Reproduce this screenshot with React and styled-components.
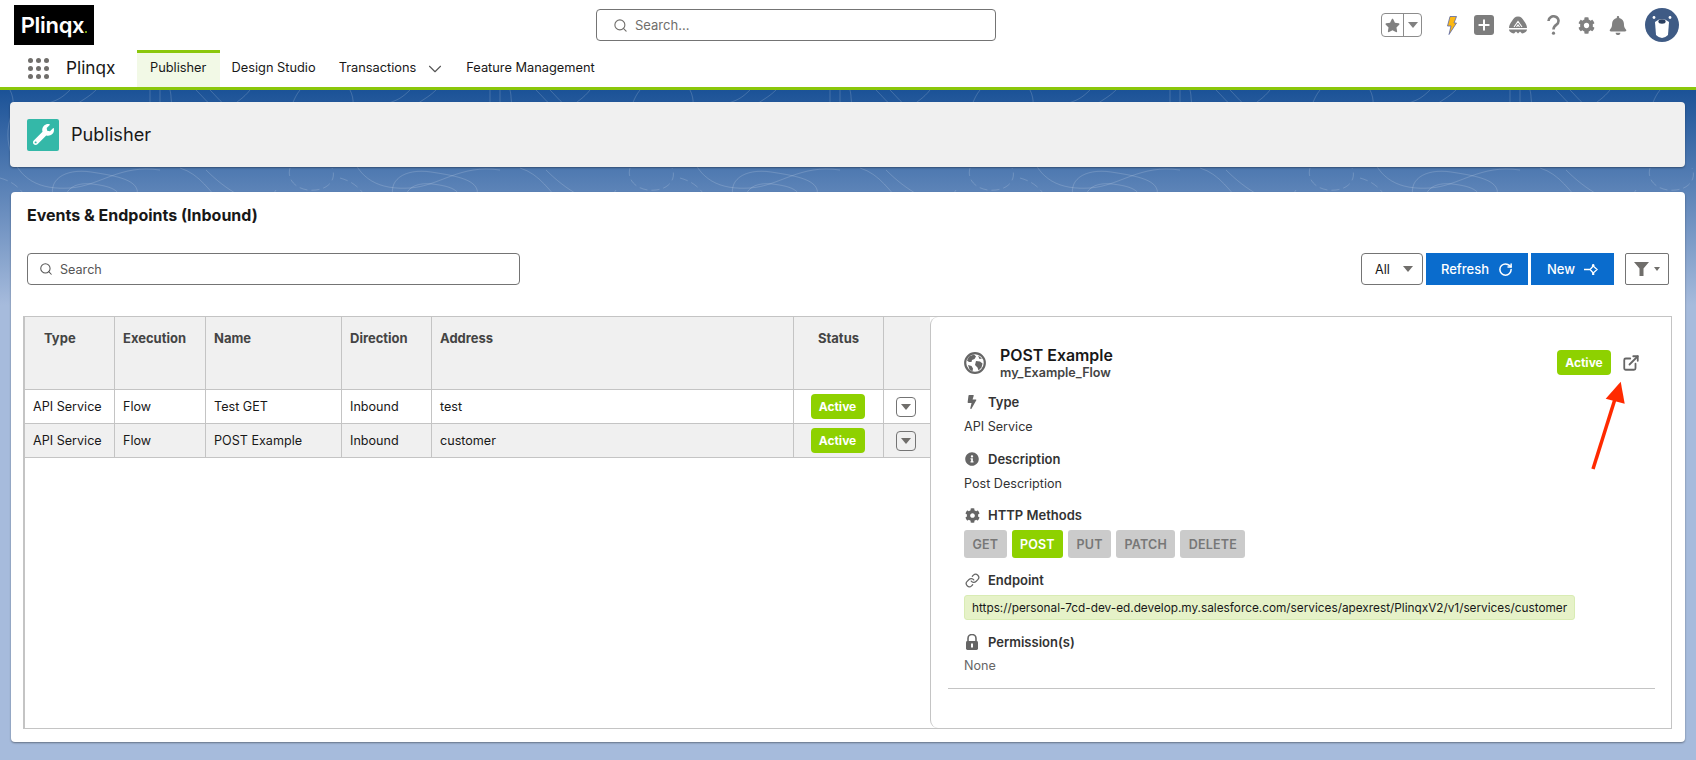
import React from "react";
import styled, { createGlobalStyle } from "styled-components";
import { Search, ChevronDown, RotateCw, ExternalLink, Link, Plus } from "lucide-react";
import { FaWrench, FaInfoCircle, FaCog, FaStar, FaBolt, FaBell } from "react-icons/fa";

const GlobalStyle = createGlobalStyle`
    html, body {
        margin: 0;
        padding: 0;
        background: #a6bbdc;
    }
    body {
        font-family: Inter, "Noto Sans", "Liberation Sans", sans-serif;
        color: #181818;
        font-size: 12.6px;
    }
    * {
        box-sizing: border-box;
    }
`;

const Shell = styled.div`
    width: 1696px;
    height: 760px;
    overflow: hidden;
    display: flex;
    flex-direction: column;
`;

const TopBar = styled.header`
    height: 50px;
    background: white;
    display: flex;
    align-items: center;
    padding: 0 17px 0 14px;
`;

const Logo = styled.div`
    width: 80px;
    height: 40px;
    background: black;
    color: white;
    font-weight: 600;
    font-size: 22px;
    letter-spacing: -0.3px;
    display: flex;
    align-items: center;
    justify-content: center;
`;

const LogoDot = styled.span`
    width: 2px;
    height: 2px;
    background: #6f9e10;
    align-self: flex-end;
    margin: 0 0 12px 1px;
`;

const GlobalSearch = styled.div`
    width: 400px;
    height: 32px;
    margin-left: 502px;
    border: 1px solid #747474;
    border-radius: 4px;
    display: flex;
    align-items: center;
    padding-left: 16px;
    gap: 7px;
    color: #706e6b;
    font-size: 13px;
`;

const TopActions = styled.div`
    margin-left: auto;
    display: flex;
    align-items: center;
    height: 34px;
`;

const Favorite = styled.div`
    width: 41px;
    height: 24px;
    border: 1px solid #8c8c8c;
    border-radius: 4px;
    display: flex;
    align-items: center;
    margin-right: 25px;
    color: #808080;
`;

const FavoriteStar = styled.div`
    width: 22px;
    height: 100%;
    display: flex;
    align-items: center;
    justify-content: center;
    border-right: 1px solid #8c8c8c;
`;

const FavoriteCaret = styled.div`
    flex: 1;
    display: flex;
    justify-content: center;
`;

const Caret = styled.span`
    width: 0;
    height: 0;
    border-left: ${(props) => props.size || 5}px solid transparent;
    border-right: ${(props) => props.size || 5}px solid transparent;
    border-top: ${(props) => (props.size || 5) + 1}px solid ${(props) => props.color || "#808080"};
    display: inline-block;
`;

const TopIcon = styled.div`
    width: ${(props) => props.width}px;
    margin-right: ${(props) => props.gap}px;
    display: flex;
    justify-content: center;
    align-items: center;
    color: #808080;
`;

const PlusBox = styled.div`
    width: 20px;
    height: 20px;
    background: #7d7d7d;
    border-radius: 3px;
    color: white;
    display: flex;
    align-items: center;
    justify-content: center;
`;

const NavBar = styled.nav`
    height: 40px;
    background: white;
    border-bottom: 3px solid #8bc70b;
    display: flex;
    align-items: stretch;
    padding-left: 28px;
`;

const Waffle = styled.div`
    width: 22px;
    display: grid;
    grid-template-columns: repeat(3, 5px);
    gap: 3px;
    align-content: center;
    margin-right: 16px;
    span {
        width: 5px;
        height: 5px;
        border-radius: 50%;
        background: #706e6b;
    }
`;

const AppName = styled.div`
    font-size: 17.2px;
    width: 71px;
    padding-bottom: 2px;
    display: flex;
    align-items: center;
`;

const NavTab = styled.div`
    display: flex;
    align-items: center;
    gap: 8px;
    padding: 0 ${(props) => (props.active ? 13 : 11.5)}px 5px;
    font-size: 12.8px;
    border-top: 3px solid ${(props) => (props.active ? "#8bc70b" : "transparent")};
    background: ${(props) => (props.active ? "#f2f9e6" : "white")};
    width: ${(props) => props.width}px;
    white-space: nowrap;
    svg {
        margin-right: -3px;
        margin-top: 2px;
    }
`;

const Stage = styled.main`
    flex: 1;
    position: relative;
    padding: 12px 11px 0 10px;
    background: linear-gradient(#1b5297 0, #a6bbdc 215px);
`;

const Contours = styled.svg`
    position: absolute;
    top: 0;
    left: 0;
    width: 100%;
    height: 120px;
`;

const PageHeader = styled.section`
    position: relative;
    height: 65px;
    background: #f0f0f0;
    border-radius: 4px;
    box-shadow: 0 1px 2px rgba(0, 0, 0, 0.35);
    display: flex;
    align-items: center;
    padding-left: 17px;
    gap: 12px;
`;

const PageIcon = styled.div`
    width: 32px;
    height: 32px;
    background: #34b8a8;
    border-radius: 2px;
    color: white;
    display: flex;
    align-items: center;
    justify-content: center;
`;

const PageTitle = styled.h1`
    margin: 0 0 2px;
    font-size: 18.2px;
    font-weight: 400;
`;

const MainCard = styled.section`
    position: relative;
    margin-top: 25px;
    margin-left: 1px;
    height: 550px;
    background: white;
    border-radius: 4px;
    box-shadow: 0 1px 2px rgba(0, 0, 0, 0.4);
    padding: 13px 13px 0 12px;
`;

const CardTitle = styled.h2`
    margin: 0;
    padding-left: 4px;
    font-size: 16px;
    line-height: 20px;
    font-weight: 700;
`;

const Toolbar = styled.div`
    margin-top: 28px;
    padding: 0 3px 0 4px;
    display: flex;
    align-items: center;
`;

const SearchField = styled.div`
    width: 493px;
    height: 32px;
    border: 1px solid #747474;
    border-radius: 4px;
    display: flex;
    align-items: center;
    gap: 7px;
    padding-left: 11px;
    font-size: 12.6px;
    color: #555;
`;

const ToolbarRight = styled.div`
    margin-left: auto;
    display: flex;
    align-items: center;
`;

const AllSelect = styled.div`
    width: 62px;
    height: 32px;
    border: 1px solid #747474;
    border-radius: 4px;
    display: flex;
    align-items: center;
    justify-content: space-between;
    padding: 0 9px 0 13px;
    margin-right: 3px;
`;

const BlueButton = styled.button`
    width: ${(props) => props.width}px;
    height: 32px;
    margin-right: 3px;
    border: none;
    background: #0a6ccd;
    color: white;
    font: inherit;
    font-size: 13px;
    font-weight: 500;
    display: flex;
    align-items: center;
    justify-content: center;
    gap: 9px;
`;

const FilterButton = styled.div`
    width: 44px;
    height: 32px;
    margin-left: 8px;
    border: 1px solid #747474;
    border-radius: 2px;
    display: flex;
    align-items: center;
    justify-content: center;
    gap: 5px;
`;

const Split = styled.div`
    margin-top: 31px;
    height: 413px;
    display: flex;
    border: 1px solid #c4c4c4;
    border-left-width: 2px;
    border-right-width: 1px;
`;

const TableSide = styled.div`
    width: 905px;
`;

const Row = styled.div`
    display: grid;
    grid-template-columns: 90px 91px 136px 90px 362px 90px 1fr;
    background: ${(props) => (props.shaded ? "#f0f0f0" : "white")};
    border-bottom: 1px solid #c4c4c4;
    height: ${(props) => props.height}px;
`;

const Cell = styled.div`
    border-right: 1px solid #c4c4c4;
    padding: ${(props) => (props.center ? "0 10px 0 8px" : "0 8px")};
    display: flex;
    align-items: center;
    justify-content: ${(props) => (props.center ? "center" : "flex-start")};
    &:last-child {
        border-right: none;
    }
`;

const HeadCell = styled.div`
    border-right: 1px solid #c4c4c4;
    padding: 13px 8px 0 ${(props) => props.indent || 8}px;
    text-align: ${(props) => (props.center ? "center" : "left")};
    font-weight: 700;
    font-size: 13px;
    line-height: 16px;
    color: #444;
    &:last-child {
        border-right: none;
    }
`;

const Badge = styled.span`
    width: 54px;
    height: 25px;
    border-radius: 4px;
    background: #8ed100;
    color: white;
    font-weight: 700;
    font-size: 12px;
    display: flex;
    align-items: center;
    justify-content: center;
`;

const RowMenu = styled.div`
    width: 20px;
    height: 20px;
    border: 1px solid #747474;
    border-radius: 4px;
    display: flex;
    align-items: center;
    justify-content: center;
    margin-left: 4px;
`;

const DetailPanel = styled.aside`
    position: relative;
    flex: 1;
    border-left: 1px solid #c4c4c4;
    border-radius: 8px 0 0 8px;
    padding: 28px 16px 0 17px;
    background: white;
`;

const DetailBody = styled.div`
    padding: 0 15px 12px 16px;
    border-bottom: 1px solid #c4c4c4;
    display: flex;
    flex-direction: column;
`;

const DetailHead = styled.div`
    display: flex;
    align-items: flex-start;
    gap: 14px;
`;

const DetailNames = styled.div`
    flex: 1;
    padding-top: 1px;
`;

const DetailName = styled.div`
    font-size: 15.9px;
    line-height: 20px;
    font-weight: 600;
    color: #181818;
`;

const DetailApi = styled.div`
    font-size: 12.6px;
    line-height: 14px;
    font-weight: 600;
    color: #444;
`;

const DetailStatus = styled.div`
    display: flex;
    align-items: center;
    gap: 11px;
    margin-top: 5px;
`;

const Label = styled.div`
    margin-top: ${(props) => props.top ?? 12}px;
    height: 20px;
    display: flex;
    align-items: center;
    gap: 8px;
    font-size: 13px;
    font-weight: 600;
    color: #333;
`;

const LabelIcon = styled.span`
    width: 16px;
    display: flex;
    justify-content: center;
    color: #666;
`;

const Value = styled.div`
    margin-top: ${(props) => props.top ?? 5}px;
    line-height: 20px;
    color: ${(props) => props.color || "#333"};
`;

const Methods = styled.div`
    margin-top: 5px;
    display: flex;
    gap: 5px;
`;

const Method = styled.span`
    height: 28px;
    padding: 0 8.4px;
    border-radius: 3px;
    background: ${(props) => (props.on ? "#8ed100" : "#cbcbcb")};
    color: ${(props) => (props.on ? "white" : "#777")};
    font-size: 12.5px;
    font-weight: 600;
    letter-spacing: 0.2px;
    display: flex;
    align-items: center;
`;

const EndpointBox = styled.div`
    margin-top: 5px;
    width: 611px;
    height: 25px;
    background: #e6f2c8;
    border: 1px solid #d9ecb4;
    border-radius: 3px;
    padding-left: 7px;
    font-size: 11.8px;
    display: flex;
    align-items: center;
    white-space: nowrap;
`;

const Arrow = styled.svg`
    position: absolute;
    left: 654px;
    top: 62px;
`;

const rows = [
    { name: "Test GET", address: "test" },
    { name: "POST Example", address: "customer", shaded: true },
];

function Bolt() {
    return (
        <svg width="10" height="19" viewBox="0 0 10 19">
            <path d="M3 .5h6.5L7 7h2.5L2 18.5 4 10H.5z" fill="#fcb814" stroke="#5867a8" strokeWidth=".8" />
        </svg>
    );
}

function QuestionIcon() {
    return (
        <svg width="13" height="20" viewBox="0 0 13 20" fill="none" stroke="#808080" strokeWidth="2.6">
            <path d="M1.5 6a5 4.6 0 1 1 8 3.6C7.5 11 6.5 12 6.5 14.5" />
            <circle cx="6.5" cy="18.2" r="1.6" fill="#808080" stroke="none" />
        </svg>
    );
}

function NewIcon() {
    return (
        <svg width="14" height="15" viewBox="0 0 16 16" fill="none" stroke="white" strokeWidth="1.5">
            <path d="M0 8h7M7 8l3.5-4M7 8l3.5 4M10.5 4L15 8l-4.5 4" />
            <circle cx="10.5" cy="3" r="1.4" fill="white" stroke="none" />
            <circle cx="10.5" cy="13" r="1.4" fill="white" stroke="none" />
        </svg>
    );
}

function FilterIcon() {
    return (
        <svg width="15" height="14" viewBox="0 0 15 14">
            <path d="M0 0h15L9.5 6.5V14h-4V6.5z" fill="#706e6b" />
        </svg>
    );
}

function GlobeIcon() {
    return (
        <svg width="22" height="22" viewBox="0 0 22 22" style={{ marginTop: 7, flexShrink: 0 }}>
            <circle cx="11" cy="11" r="9.8" fill="none" stroke="#666" strokeWidth="2.2" />
            <path d="M5 4.5l5-2 2 2-1.5 2.5-2.5 1-.5 2-2.5 0L3 8.5zM12 9l4 .5 2.5 2-1 4-3 3-1-3-2.5-2.5zM4 13l3.5 1 1.5 2.5-.5 3L5.5 17.500z M14 3.500l4 3-2.500.5z" fill="#666" />
        </svg>
    );
}

function TrailIcon() {
    return (
        <svg width="20" height="20" viewBox="0 0 20 20">
            <path d="M10 1.500c3 0 4.500 2 6 4.500 1.500 2 3 4 3 7H1c0-3 1.500-5 3-7C5.500 3.500 7 1.500 10 1.500z" fill="#808080" />
            <path d="M1 14.500h18c0 2-2 3.500-5 4l-2-2-2 2-2-2-2 2c-3-.5-5-2-5-4z" fill="#808080" />
            <path d="M6 12L10 6.500 14 12M8.500 12l1.500-2 1.500 2" fill="none" stroke="white" strokeWidth="1.1" />
        </svg>
    );
}

function Avatar() {
    return (
        <svg width="34" height="34" viewBox="0 0 34 34">
            <circle cx="17" cy="17" r="17" fill="#3f5b85" />
            <circle cx="9" cy="9.500" r="1.400" fill="white" />
            <circle cx="25" cy="9.500" r="1.400" fill="white" />
            <path d="M10 14 Q17 8 24 14 L23 27 Q17 33 11 27 Z" fill="white" />
            <ellipse cx="17" cy="13.500" rx="3.600" ry="2.200" fill="#2b3f60" />
        </svg>
    );
}

function LockIcon() {
    return (
        <svg width="14" height="16" viewBox="0 0 14 16">
            <path d="M3 7V4.500a4 4 0 0 1 8 0V7" fill="none" stroke="#666" strokeWidth="1.600" />
            <rect x="1" y="7" width="12" height="9" rx="1.400" fill="#666" />
            <rect x="6" y="9.500" width="2" height="4" fill="white" />
        </svg>
    );
}

function App() {
    return (
        <Shell>
            <GlobalStyle />
            <TopBar>
                <Logo>
                    Plinqx
                    <LogoDot />
                </Logo>
                <GlobalSearch>
                    <Search size={15} strokeWidth={1.8} />
                    Search...
                </GlobalSearch>
                <TopActions>
                    <Favorite>
                        <FavoriteStar>
                            <FaStar size={15} />
                        </FavoriteStar>
                        <FavoriteCaret>
                            <Caret size={5} />
                        </FavoriteCaret>
                    </Favorite>
                    <TopIcon width={10} gap={17}>
                        <Bolt />
                    </TopIcon>
                    <TopIcon width={20} gap={14}>
                        <PlusBox>
                            <Plus size={16} strokeWidth={3} />
                        </PlusBox>
                    </TopIcon>
                    <TopIcon width={20} gap={19}>
                        <TrailIcon />
                    </TopIcon>
                    <TopIcon width={13} gap={18}>
                        <QuestionIcon />
                    </TopIcon>
                    <TopIcon width={17} gap={14}>
                        <FaCog size={19} />
                    </TopIcon>
                    <TopIcon width={18} gap={18}>
                        <FaBell size={19} />
                    </TopIcon>
                    <Avatar />
                </TopActions>
            </TopBar>
            <NavBar>
                <Waffle>
                    {Array.from({ length: 9 }, (_, i) => (
                        <span key={i} />
                    ))}
                </Waffle>
                <AppName>Plinqx</AppName>
                <NavTab active width={83}>Publisher</NavTab>
                <NavTab>Design Studio</NavTab>
                <NavTab>
                    Transactions
                    <ChevronDown size={22} strokeWidth={1.2} color="#555" />
                </NavTab>
                <NavTab>Feature Management</NavTab>
            </NavBar>
            <Stage>
                <Contours>
                    <defs>
                        <pattern id="topo" width="340" height="120" patternUnits="userSpaceOnUse">
                            <g fill="none" stroke="white" strokeOpacity="0.16" strokeWidth="1">
                                <path d="M10 0c10 20 -8 30 0 60s30 40 60 38 50-24 90-18" />
                                <path d="M70 0c-16 16-20 8-34 22M96 0c-10 10-20 12-30 24" />
                                <path d="M150 0v16M160 0v18M170 0c2 8 0 12 4 20M196 0c10 10 14 16 22 20M210 0c8 8 12 14 20 18" />
                                <path d="M250 0c-6 8-14 12-20 18M300 0c-8 10-6 16-14 22" />
                                <path d="M55 112c-10-22 10-34 36-30s50 8 46 24-22 14-30 14" />
                                <path d="M66 116c-4-16 8-24 26-22s30 6 28 18" />
                                <path d="M180 78c20 6 30 24 44 38M206 80c10 10 20 18 34 26s30 4 36-6" />
                                <path d="M290 78c-4 14 10 24 26 22s20-14 16-22M0 88c14 4 20 10 28 22" strokeDasharray="8 4" />
                            </g>
                        </pattern>
                    </defs>
                    <rect width="100%" height="120" fill="url(#topo)" />
                </Contours>
                <PageHeader>
                    <PageIcon>
                        <FaWrench size={21} />
                    </PageIcon>
                    <PageTitle>Publisher</PageTitle>
                </PageHeader>
                <MainCard>
                    <CardTitle>Events &amp; Endpoints (Inbound)</CardTitle>
                    <Toolbar>
                        <SearchField>
                            <Search size={14} strokeWidth={1.8} color="#555" />
                            Search
                        </SearchField>
                        <ToolbarRight>
                            <AllSelect>
                                All
                                <Caret size={5} color="#706e6b" />
                            </AllSelect>
                            <BlueButton width={102}>
                                Refresh
                                <RotateCw size={15} strokeWidth={2.4} />
                            </BlueButton>
                            <BlueButton width={83}>
                                New
                                <NewIcon />
                            </BlueButton>
                            <FilterButton>
                                <FilterIcon />
                                <Caret size={3} color="#706e6b" />
                            </FilterButton>
                        </ToolbarRight>
                    </Toolbar>
                    <Split>
                        <TableSide>
                            <Row height={73} shaded>
                                <HeadCell indent={19}>Type</HeadCell>
                                <HeadCell>Execution</HeadCell>
                                <HeadCell>Name</HeadCell>
                                <HeadCell>Direction</HeadCell>
                                <HeadCell>Address</HeadCell>
                                <HeadCell center>Status</HeadCell>
                                <HeadCell />
                            </Row>
                            {rows.map((row) => (
                                <Row key={row.name} height={34} shaded={row.shaded}>
                                    <Cell>API Service</Cell>
                                    <Cell>Flow</Cell>
                                    <Cell>{row.name}</Cell>
                                    <Cell>Inbound</Cell>
                                    <Cell>{row.address}</Cell>
                                    <Cell center>
                                        <Badge>Active</Badge>
                                    </Cell>
                                    <Cell>
                                        <RowMenu>
                                            <Caret size={5} color="#706e6b" />
                                        </RowMenu>
                                    </Cell>
                                </Row>
                            ))}
                        </TableSide>
                        <DetailPanel>
                            <DetailBody>
                                <DetailHead>
                                    <GlobeIcon />
                                    <DetailNames>
                                        <DetailName>POST Example</DetailName>
                                        <DetailApi>my_Example_Flow</DetailApi>
                                    </DetailNames>
                                    <DetailStatus>
                                        <Badge>Active</Badge>
                                        <ExternalLink size={18} strokeWidth={2.4} color="#666" />
                                    </DetailStatus>
                                </DetailHead>
                                <Label>
                                    <LabelIcon><FaBolt size={14} /></LabelIcon>
                                    Type
                                </Label>
                                <Value>API Service</Value>
                                <Label>
                                    <LabelIcon><FaInfoCircle size={14} /></LabelIcon>
                                    Description
                                </Label>
                                <Value>Post Description</Value>
                                <Label top={11}>
                                    <LabelIcon><FaCog size={15} /></LabelIcon>
                                    HTTP Methods
                                </Label>
                                <Methods>
                                    <Method>GET</Method>
                                    <Method on>POST</Method>
                                    <Method>PUT</Method>
                                    <Method>PATCH</Method>
                                    <Method>DELETE</Method>
                                </Methods>
                                <Label>
                                    <LabelIcon><Link size={15} strokeWidth={2} /></LabelIcon>
                                    Endpoint
                                </Label>
                                <EndpointBox>https://personal-7cd-dev-ed.develop.my.salesforce.com/services/apexrest/PlinqxV2/v1/services/customer</EndpointBox>
                                <Label>
                                    <LabelIcon><LockIcon /></LabelIcon>
                                    Permission(s)
                                </Label>
                                <Value top={4} color="#666">None</Value>
                            </DetailBody>
                            <Arrow width="50" height="95" viewBox="0 0 50 95">
                                <path d="M8 90 L30 20" stroke="#ff2a00" strokeWidth="3.5" fill="none" />
                                <path d="M35.7 2.7 L20.7 19.7 L39.7 24.7 Z" fill="#ff2a00" />
                            </Arrow>
                        </DetailPanel>
                    </Split>
                </MainCard>
            </Stage>
        </Shell>
    );
}

export default App;
